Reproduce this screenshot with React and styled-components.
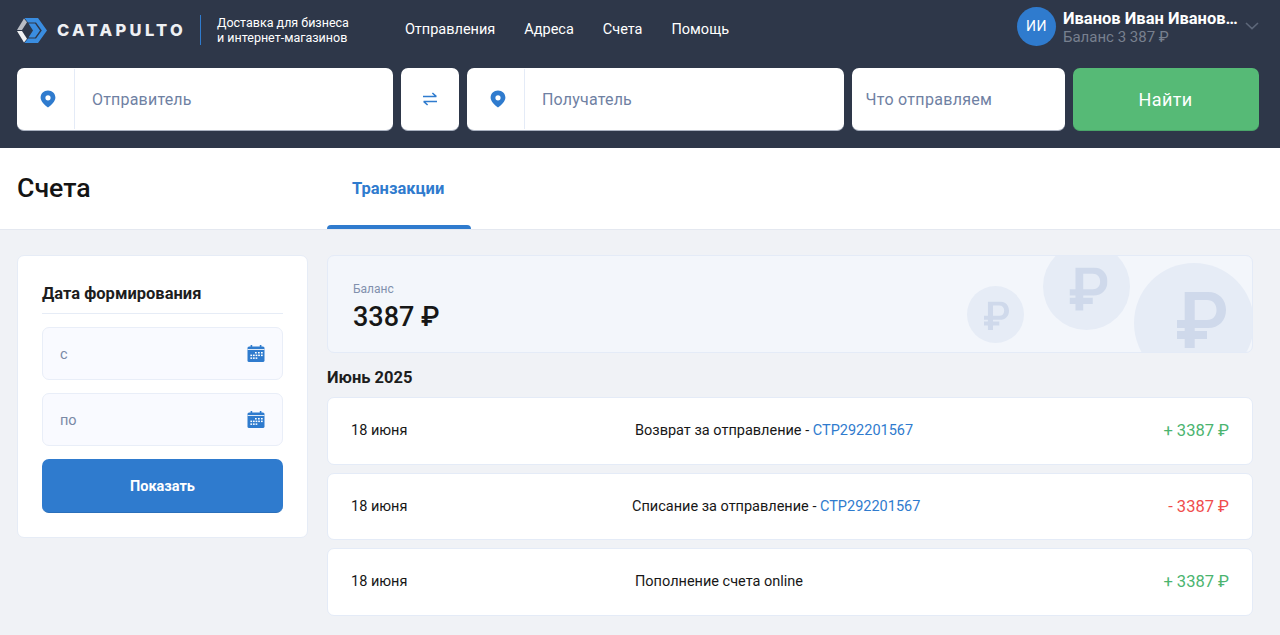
import React from "react";
import styled, { createGlobalStyle } from "styled-components";

const GlobalStyle = createGlobalStyle`
  html, body {
    margin: 0;
    padding: 0;
    background: #f0f2f6;
    font-family: Roboto, "Liberation Sans", sans-serif;
    overflow: hidden;
  }
  * { box-sizing: border-box; }
`;

function Logo() {
  return (
    <svg width="30" height="25" viewBox="0 0 30 25">
      <path d="M7 0.5 L10 4.2 L5 12 L0 12 Z" fill="#b9bdc5" />
      <path d="M0 13 L5 13 L10 20.8 L7 24.5 Z" fill="#f1f2f4" />
      <path d="M7.5 0 L21 0 L30 12.5 L21 25 L7.5 25 L11 20.6 L19 20.6 L24.8 12.5 L19 4.4 L11 4.4 Z" fill="#3a8de0" />
      <path d="M11.5 5.6 L18 5.6 L23 12.5 L18 19.4 L11.5 19.4 L16 12.5 Z" fill="#3a8de0" />
    </svg>
  );
}

function Pin() {
  return (
    <svg width="16" height="18" viewBox="0 0 16 18">
      <path
        fillRule="evenodd"
        d="M8 0.5 C3.8 0.5 0.6 3.6 0.6 7.6 C0.6 11.4 4.6 15.4 8 17.6 C11.4 15.4 15.4 11.4 15.4 7.6 C15.4 3.6 12.2 0.5 8 0.5 Z M8 5.2 A2.6 2.6 0 1 1 8 10.4 A2.6 2.6 0 1 1 8 5.2 Z"
        fill="#2f7bce"
      />
    </svg>
  );
}

function Swap() {
  return (
    <svg width="16" height="14" viewBox="0 0 16 14" fill="none" stroke="#2f7bce" strokeWidth="1.5">
      <path d="M1 4.6 H14.4 M10.4 1 L14.4 4.6" />
      <path d="M15 9.4 H1.6 M5.6 13 L1.6 9.4" />
    </svg>
  );
}

function CalendarIcon() {
  return (
    <svg width="18" height="17" viewBox="0 0 18 17">
      <rect x="0.5" y="1.5" width="17" height="15.5" rx="1.6" fill="#2f7bce" />
      <rect x="3.6" y="0" width="1.6" height="3" fill="#2f7bce" />
      <rect x="12.8" y="0" width="1.6" height="3" fill="#2f7bce" />
      <rect x="0.5" y="4" width="17" height="1" fill="#dfe9f6" />
      <g fill="#ffffff">
        <rect x="8" y="7" width="1.7" height="1.5" />
        <rect x="11" y="7" width="1.7" height="1.5" />
        <rect x="14" y="7" width="1.7" height="1.5" />
        <rect x="3.4" y="9.6" width="1.7" height="1.5" />
        <rect x="6" y="9.6" width="1.7" height="1.5" />
        <rect x="8.6" y="9.6" width="1.7" height="1.5" />
        <rect x="11.2" y="9.6" width="1.7" height="1.5" />
        <rect x="14" y="9.6" width="1.7" height="1.5" />
        <rect x="3.4" y="12.4" width="1.7" height="1.5" />
        <rect x="6" y="12.4" width="1.7" height="1.5" />
        <rect x="8.6" y="12.4" width="1.7" height="1.5" />
      </g>
    </svg>
  );
}

function Chevron() {
  return (
    <svg width="14" height="8" viewBox="0 0 14 8" fill="none" stroke="#5d6779" strokeWidth="1.6">
      <path d="M1 1 L7 6.6 L13 1" />
    </svg>
  );
}

function Coin({ size, glyph, dx, dy }) {
  return (
    <CoinCircle $size={size}>
      <CoinGlyph $dx={dx} $dy={dy} width={glyph} height={(glyph * 56) / 49} viewBox="0 0 49 56" fill="#cfd9eb">
        <path
          fillRule="evenodd"
          d="M7.7 0 H31 C42 0 49 7.5 49 18 C49 28.5 42 36 31 36 H17.7 V39 H30 V47 H17.7 V56 H7.7 V47 H0 V39 H7.7 V36 H0 V28 H7.7 Z M17.7 8 V28 H30 C36 28 39.5 24 39.5 18 C39.5 12 36 8 30 8 Z"
        />
      </CoinGlyph>
    </CoinCircle>
  );
}

export default function App() {
  return (
    <Page>
      <GlobalStyle />
      <Header>
        <TopRow>
          <LogoLink>
            <Logo />
            <LogoText>CATAPULTO</LogoText>
          </LogoLink>
          <Slogan>
            Доставка для бизнеса
            <br />
            и интернет-магазинов
          </Slogan>
          <Nav>
            <NavItem>Отправления</NavItem>
            <NavItem>Адреса</NavItem>
            <NavItem>Счета</NavItem>
            <NavItem>Помощь</NavItem>
          </Nav>
          <User>
            <Avatar>ИИ</Avatar>
            <UserInfo>
              <UserName>Иванов Иван Иванович</UserName>
              <UserBalance>Баланс 3 387 ₽</UserBalance>
            </UserInfo>
            <Chevron />
          </User>
        </TopRow>
        <SearchRow>
          <Field $width={376}>
            <PinCell><Pin /></PinCell>
            <FieldText>Отправитель</FieldText>
          </Field>
          <SwapButton><Swap /></SwapButton>
          <Field $width={376.5}>
            <PinCell><Pin /></PinCell>
            <FieldText>Получатель</FieldText>
          </Field>
          <Field $width={213}>
            <WhatText>Что отправляем</WhatText>
          </Field>
          <FindButton>Найти</FindButton>
        </SearchRow>
      </Header>

      <SubHeader>
        <PageTitle>Счета</PageTitle>
        <Tab>
          <TabText>Транзакции</TabText>
          <TabLine />
        </Tab>
      </SubHeader>

      <Content>
        <Sidebar>
          <SidebarTitle>Дата формирования</SidebarTitle>
          <DateField>
            <DateLabel>с</DateLabel>
            <CalendarIcon />
          </DateField>
          <DateField>
            <DateLabel>по</DateLabel>
            <CalendarIcon />
          </DateField>
          <ShowButton>Показать</ShowButton>
        </Sidebar>

        <Main>
          <BalanceCard>
            <BalanceLabel>Баланс</BalanceLabel>
            <BalanceValue>3387 ₽</BalanceValue>
            <CoinSmall><Coin size={57} glyph={25} dx={1} dy={1.5} /></CoinSmall>
            <CoinMiddle><Coin size={87} glyph={38} dx={1.5} dy={2.5} /></CoinMiddle>
            <CoinLarge><Coin size={120} glyph={49} dx={7} dy={-3} /></CoinLarge>
          </BalanceCard>
          <MonthTitle>Июнь 2025</MonthTitle>
          <Rows>
            <Row>
              <RowDate>18 июня</RowDate>
              <RowTitle>
                Возврат за отправление - <RowLink>СТР292201567</RowLink>
              </RowTitle>
              <Amount $color="#4bb46f">+ 3387 ₽</Amount>
            </Row>
            <Row>
              <RowDate>18 июня</RowDate>
              <RowTitle $shift={-3}>
                Списание за отправление - <RowLink>СТР292201567</RowLink>
              </RowTitle>
              <Amount $color="#f04d4d">- 3387 ₽</Amount>
            </Row>
            <Row>
              <RowDate>18 июня</RowDate>
              <RowTitle>Пополнение счета online</RowTitle>
              <Amount $color="#4bb46f">+ 3387 ₽</Amount>
            </Row>
          </Rows>
        </Main>
      </Content>
    </Page>
  );
}

const Page = styled.div`
  width: 1280px;
  height: 635px;
  overflow: hidden;
  background: #f0f2f6;
  display: flex;
  flex-direction: column;
`;

const Header = styled.header`
  height: 148px;
  background: #2e3749;
  padding: 0 21px 0 17px;
  display: flex;
  flex-direction: column;
`;

const TopRow = styled.div`
  height: 68px;
  padding-bottom: 8px;
  display: flex;
  align-items: center;
`;

const LogoLink = styled.div`
  width: 183px;
  display: flex;
  align-items: center;
  gap: 10px;
`;

const LogoText = styled.span`
  font-family: Inter, sans-serif;
  font-weight: 800;
  font-size: 16.5px;
  letter-spacing: 3.3px;
  color: #eef0f3;
  white-space: nowrap;
`;

const Slogan = styled.div`
  height: 30px;
  padding-left: 16px;
  border-left: 1px solid #2f7bce;
  font-size: 12.5px;
  line-height: 15px;
  color: #ffffff;
  white-space: nowrap;
`;

const Nav = styled.nav`
  margin-left: 56px;
  margin-bottom: 2px;
  display: flex;
  gap: 29px;
`;

const NavItem = styled.span`
  font-size: 14.5px;
  color: #ffffff;
`;

const User = styled.div`
  margin-left: auto;
  margin-bottom: 8px;
  display: flex;
  align-items: center;
`;

const Avatar = styled.div`
  width: 39px;
  height: 39px;
  border-radius: 50%;
  background: #2f7bce;
  color: #ffffff;
  font-size: 14px;
  letter-spacing: 0.5px;
  display: flex;
  align-items: center;
  justify-content: center;
`;

const UserInfo = styled.div`
  margin: 3px 4px 0 7px;
  width: 178px;
`;

const UserName = styled.div`
  font-size: 16.5px;
  line-height: 19px;
  font-weight: 700;
  color: #ffffff;
  white-space: nowrap;
  overflow: hidden;
  text-overflow: ellipsis;
`;

const UserBalance = styled.div`
  font-size: 15px;
  line-height: 19px;
  color: #78808f;
`;

const SearchRow = styled.div`
  display: flex;
  gap: 8px;
`;

const Field = styled.div`
  width: ${(p) => p.$width}px;
  height: 63px;
  background: #ffffff;
  border-radius: 7px;
  border-bottom: 1px solid #a9b1c0;
  display: flex;
  align-items: center;
  padding: 1px 0;
`;

const PinCell = styled.div`
  width: 58px;
  height: 100%;
  padding-left: 4px;
  border-right: 1px solid #e4ebf7;
  display: flex;
  align-items: center;
  justify-content: center;
`;

const FieldText = styled.span`
  margin-left: 17px;
  font-size: 16px;
  letter-spacing: 0.2px;
  color: #6f81a3;
`;

const WhatText = styled(FieldText)`
  margin-left: 14px;
  letter-spacing: 0.3px;
`;

const SwapButton = styled.div`
  width: 58px;
  height: 63px;
  background: #ffffff;
  border-radius: 7px;
  border-bottom: 1px solid #a9b1c0;
  display: flex;
  align-items: center;
  justify-content: center;
`;

const FindButton = styled.button`
  width: 186px;
  height: 63px;
  border: 0;
  border-bottom: 1px solid #4aa56a;
  border-radius: 7px;
  background: #56ba76;
  color: #ffffff;
  font-family: inherit;
  font-size: 18px;
  letter-spacing: 0.4px;
`;

const SubHeader = styled.div`
  height: 82px;
  background: #ffffff;
  border-bottom: 1px solid #e4e8f0;
  padding-left: 17px;
  display: flex;
`;

const PageTitle = styled.h1`
  margin: 0;
  width: 310px;
  padding-top: 24px;
  font-size: 26.7px;
  line-height: 32px;
  font-weight: 500;
  color: #141414;
`;

const Tab = styled.div`
  width: 144px;
  height: 81px;
  padding-top: 31px;
  display: flex;
  flex-direction: column;
`;

const TabText = styled.span`
  padding-left: 25px;
  font-size: 16.5px;
  line-height: 20px;
  font-weight: 700;
  color: #2f7bce;
`;

const TabLine = styled.div`
  margin-top: auto;
  height: 4px;
  background: #2f7bce;
  border-radius: 4px 4px 0 0;
`;

const Content = styled.div`
  flex: 1;
  padding: 25px 27px 0 17px;
  display: flex;
  align-items: flex-start;
  gap: 19px;
`;

const Sidebar = styled.aside`
  width: 291px;
  height: 283px;
  background: #ffffff;
  border: 1px solid #e6ecf6;
  border-radius: 7px;
  padding: 24px 24px 0 24px;
  display: flex;
  flex-direction: column;
`;

const SidebarTitle = styled.div`
  height: 34px;
  border-bottom: 1px solid #e6ecf6;
  font-size: 16.5px;
  line-height: 27px;
  font-weight: 700;
  color: #1d1d1d;
  margin-bottom: 13px;
`;

const DateField = styled.div`
  height: 53px;
  background: #f9faff;
  border: 1px solid #e9eef8;
  border-radius: 7px;
  margin-bottom: 13px;
  padding: 0 17px;
  display: flex;
  align-items: center;
  justify-content: space-between;
`;

const DateLabel = styled.span`
  margin-top: 2px;
  font-size: 14.5px;
  color: #7a89a6;
`;

const ShowButton = styled.button`
  height: 54px;
  padding-top: 2px;
  border: 0;
  border-bottom: 1px solid #2a6fba;
  border-radius: 7px;
  background: #2f7bce;
  color: #ffffff;
  font-family: inherit;
  font-size: 14.5px;
  font-weight: 700;
`;

const Main = styled.main`
  width: 926px;
  display: flex;
  flex-direction: column;
`;

const BalanceCard = styled.section`
  position: relative;
  overflow: hidden;
  height: 98px;
  background: #f3f6fb;
  border: 1px solid #e4ebf7;
  border-radius: 7px;
  padding: 25px 25px 0;
`;

const BalanceLabel = styled.div`
  font-size: 12px;
  line-height: 16px;
  margin-bottom: 3px;
  color: #8190ad;
`;

const BalanceValue = styled.div`
  font-size: 27px;
  line-height: 34px;
  font-weight: 500;
  color: #171717;
`;

const CoinCircle = styled.div`
  width: ${(p) => p.$size}px;
  height: ${(p) => p.$size}px;
  border-radius: 50%;
  background: #e6ecf6;
  display: flex;
  align-items: center;
  justify-content: center;
`;

const CoinGlyph = styled.svg`
  transform: translate(${(p) => p.$dx}px, ${(p) => p.$dy}px);
`;

const CoinSmall = styled.div`
  position: absolute;
  left: 639px;
  top: 30px;
`;

const CoinMiddle = styled.div`
  position: absolute;
  left: 715px;
  top: -13px;
`;

const CoinLarge = styled.div`
  position: absolute;
  left: 806px;
  top: 7px;
`;

const MonthTitle = styled.div`
  margin-top: 15px;
  height: 29px;
  font-size: 16.5px;
  line-height: 19px;
  font-weight: 700;
  color: #1d1d1d;
`;

const Rows = styled.div`
  display: flex;
  flex-direction: column;
  gap: 8px;
`;

const Row = styled.div`
  height: 67.5px;
  background: #ffffff;
  border: 1px solid #e4ebf7;
  border-radius: 7px;
  padding: 0 23px;
  display: grid;
  grid-template-columns: 284px 1fr auto;
  align-items: center;
  font-size: 14.5px;
  color: #171717;
`;

const RowDate = styled.span``;

const RowTitle = styled.span`
  margin-left: ${(p) => p.$shift || 0}px;
`;

const RowLink = styled.span`
  color: #2f7bce;
`;

const Amount = styled.span`
  font-size: 16.5px;
  color: ${(p) => p.$color};
`;
